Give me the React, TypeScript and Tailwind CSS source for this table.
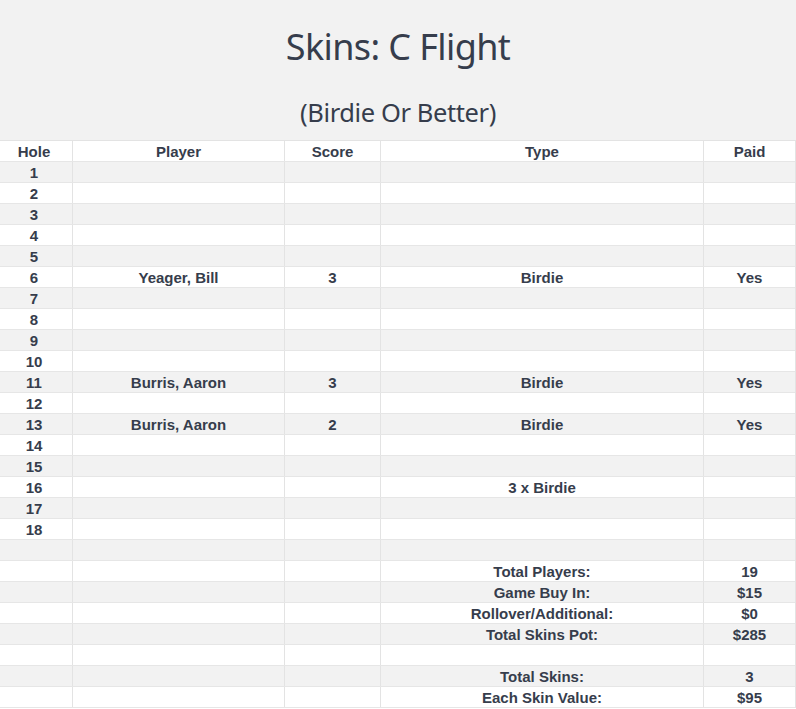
const holes: { hole: string; player?: string; score?: string; type?: string; paid?: string }[] = [
  { hole: "1" },
  { hole: "2" },
  { hole: "3" },
  { hole: "4" },
  { hole: "5" },
  { hole: "6", player: "Yeager, Bill", score: "3", type: "Birdie", paid: "Yes" },
  { hole: "7" },
  { hole: "8" },
  { hole: "9" },
  { hole: "10" },
  { hole: "11", player: "Burris, Aaron", score: "3", type: "Birdie", paid: "Yes" },
  { hole: "12" },
  { hole: "13", player: "Burris, Aaron", score: "2", type: "Birdie", paid: "Yes" },
  { hole: "14" },
  { hole: "15" },
  { hole: "16", type: "3 x Birdie" },
  { hole: "17" },
  { hole: "18" },
  { hole: "" },
];

const totals: { label: string; value: string }[] = [
  { label: "Total Players:", value: "19" },
  { label: "Game Buy In:", value: "$15" },
  { label: "Rollover/Additional:", value: "$0" },
  { label: "Total Skins Pot:", value: "$285" },
  { label: "", value: "" },
  { label: "Total Skins:", value: "3" },
  { label: "Each Skin Value:", value: "$95" },
];

function Row({ cells, shaded }: { cells: string[]; shaded: boolean }) {
  return (
    <div
      className={`grid h-[21px] grid-cols-[73px_212px_96px_323px_91px] border-b border-[#e6e6e6] ${
        shaded ? "bg-[#f2f2f2]" : "bg-white"
      }`}
    >
      {cells.map((c, i) => (
        <div
          key={i}
          className={`flex items-center justify-center pt-[1px] leading-none ${i < 4 ? "border-r border-[#e3e3e3]" : ""} ${
            i === 0 ? "pr-[4px]" : ""
          }`}
        >
          {c}
        </div>
      ))}
    </div>
  );
}

export default function App() {
  return (
    <div className="w-[796px] bg-white text-[#363d4c]">
      <div className="flex h-[140px] flex-col items-center bg-[#f2f2f2] font-['Noto_Sans',sans-serif]">
        <h1 className="mt-[22px] text-[36px] leading-[50px] tracking-[-0.6px]">Skins: C Flight</h1>
        <h2 className="mt-[22px] text-[25.5px] leading-[36px] tracking-[-0.4px]">(Birdie Or Better)</h2>
      </div>
      <div className="border-r border-t border-[#e3e3e3] font-['Liberation_Sans',Arial,sans-serif] text-[15px] font-bold">
        <Row cells={["Hole", "Player", "Score", "Type", "Paid"]} shaded={false} />
        {holes.map((h, i) => (
          <Row
            key={i}
            shaded={i % 2 === 0}
            cells={[h.hole, h.player ?? "", h.score ?? "", h.type ?? "", h.paid ?? ""]}
          />
        ))}
        {totals.map((t, i) => (
          <Row key={`t${i}`} shaded={i % 2 === 1} cells={["", "", "", t.label, t.value]} />
        ))}
      </div>
    </div>
  );
}
